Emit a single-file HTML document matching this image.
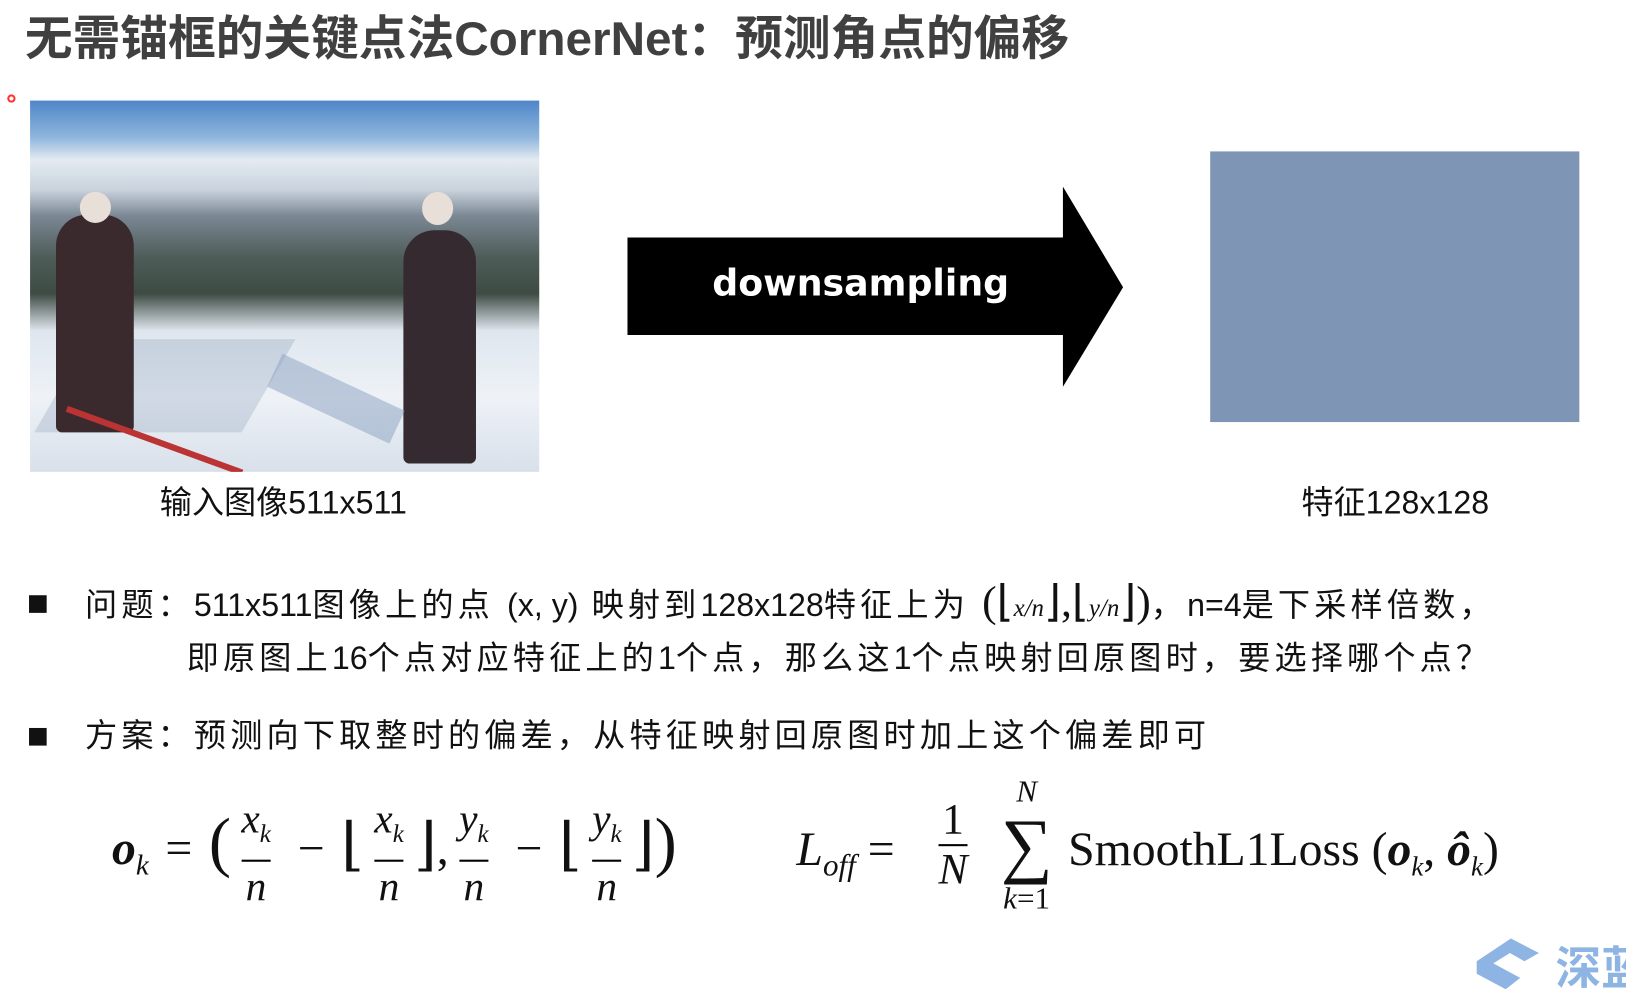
<!DOCTYPE html>
<html><head><meta charset="utf-8"><style>
body{margin:0;width:1626px;height:954px;background:#fff;position:relative;overflow:hidden;font-family:"Liberation Sans","Noto Sans CJK SC",sans-serif;color:#111}
#w{position:absolute;left:0;top:0;width:1568px;height:920px;transform:scale(1.037);transform-origin:0 0}
.a{position:absolute;white-space:nowrap}
.t{left:24px;top:1px;font-size:46px;font-weight:bold;color:#404040}
.sq{width:17px;height:17px;background:#111}
.txt{font-size:31px;letter-spacing:4px}
.txt span.l{letter-spacing:0}
.cap{font-size:31px}
.m{font-family:"Liberation Serif","DejaVu Serif",serif;font-size:46px}
.fr{display:inline-block;text-align:center;vertical-align:middle;font-size:40px;line-height:48px;margin:0 10px}
.fr span{border-top:2px solid #000;display:block}
.op{margin:0 16px}
</style></head><body><div id="w">
<div class="a t">无需锚框的关键点法CornerNet：预测角点的偏移</div>
<div class="a" style="left:7px;top:91px;width:8px;height:8px;border-radius:50%;border:2px solid #f33;box-sizing:border-box"></div>
<div class="a" style="left:29px;top:97px;width:491px;height:358px;overflow:hidden;background:linear-gradient(#4f86c9 0%,#8fb6dc 10%,#e4ebf1 16%,#c9d3dd 24%,#7b8894 31%,#4f5d5a 42%,#3d4b43 52%,#dfe6ee 62%,#eef2f7 80%,#d8e0ea 100%)">
<div class="a" style="left:30px;top:230px;width:200px;height:90px;background:#8ca0b8;opacity:.3;transform:skewX(-30deg)"></div>
<div class="a" style="left:25px;top:110px;width:75px;height:210px;background:#3a2a2e;border-radius:30px 30px 6px 6px"></div>
<div class="a" style="left:48px;top:88px;width:30px;height:30px;background:#e8e0d8;border-radius:50%"></div>
<div class="a" style="left:360px;top:125px;width:70px;height:225px;background:#352a30;border-radius:30px 30px 6px 6px"></div>
<div class="a" style="left:378px;top:88px;width:30px;height:32px;background:#e8e0d8;border-radius:50%"></div>
<div class="a" style="left:230px;top:270px;width:130px;height:35px;background:#8aa0c0;opacity:.5;transform:rotate(25deg)"></div>
<div class="a" style="left:30px;top:325px;width:180px;height:6px;background:#b33;transform:rotate(20deg)"></div>
</div>
<div class="a cap" style="left:154px;top:459px">输入图像511x511</div>
<svg class="a" style="left:605px;top:180px" width="480" height="195"><polygon points="0,49 420,49 420,0 478,97 420,193 420,143 0,143" fill="#000"/></svg>
<div class="a" style="left:605px;top:254px;width:450px;text-align:center;font-size:35px;font-weight:bold;color:#fff;font-family:'DejaVu Sans','Liberation Sans',sans-serif">downsampling</div>
<div class="a" style="left:1167px;top:146px;width:356px;height:261px;background:#7f95b5"></div>
<div class="a cap" style="left:1255px;top:459px">特征128x128</div>
<div class="a sq" style="left:28px;top:574px"></div>
<div class="a txt" style="left:82px;top:555px">问题：<span class="l">511x511</span>图像上的点 <span class="l">(x, y)</span> 映射到<span class="l">128x128</span>特征上为 <span class="l" style="font-family:'Liberation Serif',serif;font-size:42px">(⌊<i style="font-size:24px">x/n</i>⌋,⌊<i style="font-size:24px">y/n</i>⌋)</span>，<span class="l">n=4</span>是下采样倍数，</div>
<div class="a txt" style="left:180px;top:609px">即原图上<span class="l">16</span>个点对应特征上的<span class="l">1</span>个点，那么这<span class="l">1</span>个点映射回原图时，要选择哪个点？</div>
<div class="a sq" style="left:28px;top:702px"></div>
<div class="a txt" style="left:82px;top:684px;letter-spacing:4px">方案：预测向下取整时的偏差，从特征映射回原图时加上这个偏差即可</div>
<div class="a m" style="left:108px;top:766px"><b><i>o</i></b><sub style="font-size:28px"><i>k</i></sub><span class="op">=</span><span style="font-size:64px">(</span><span class="fr"><i>x<sub style="font-size:24px">k</sub></i><span><i>n</i></span></span><span class="op">−</span><span style="font-size:56px">⌊</span><span class="fr"><i>x<sub style="font-size:24px">k</sub></i><span><i>n</i></span></span><span style="font-size:56px">⌋</span>,<span class="fr"><i>y<sub style="font-size:24px">k</sub></i><span><i>n</i></span></span><span class="op">−</span><span style="font-size:56px">⌊</span><span class="fr"><i>y<sub style="font-size:24px">k</sub></i><span><i>n</i></span></span><span style="font-size:56px">⌋</span><span style="font-size:64px">)</span></div>
<div class="a m" style="left:768px;top:792px"><i>L</i><sub style="font-size:30px"><i>off</i></sub> =</div>
<div class="a m" style="left:905px;top:768px;text-align:center;line-height:46px;font-size:42px">1<br><span style="border-top:2px solid #000;display:block"><i>N</i></span></div>
<div class="a m" style="left:955px;top:752px;font-size:70px;line-height:80px;text-align:center;width:70px"><span style="font-size:30px;line-height:24px;display:block"><i>N</i></span>∑<span style="font-size:30px;line-height:30px;display:block;margin-top:-4px"><i>k</i>=1</span></div>
<div class="a m" style="left:1030px;top:792px">SmoothL1Loss (<b><i>o</i></b><sub style="font-size:26px"><i>k</i></sub>, <b><i>ô</i></b><sub style="font-size:26px"><i>k</i></sub>)</div>
<svg class="a" style="left:1422px;top:905px" width="70" height="49"><polygon points="35,0 62,14 48,22 34,14 18,24 44,38 30,49 2,34 2,22" fill="#8db4e2"/></svg>
<div class="a" style="left:1500px;top:898px;font-size:44px;color:#8db4e2;font-weight:bold">深蓝</div>
</div></body></html>
